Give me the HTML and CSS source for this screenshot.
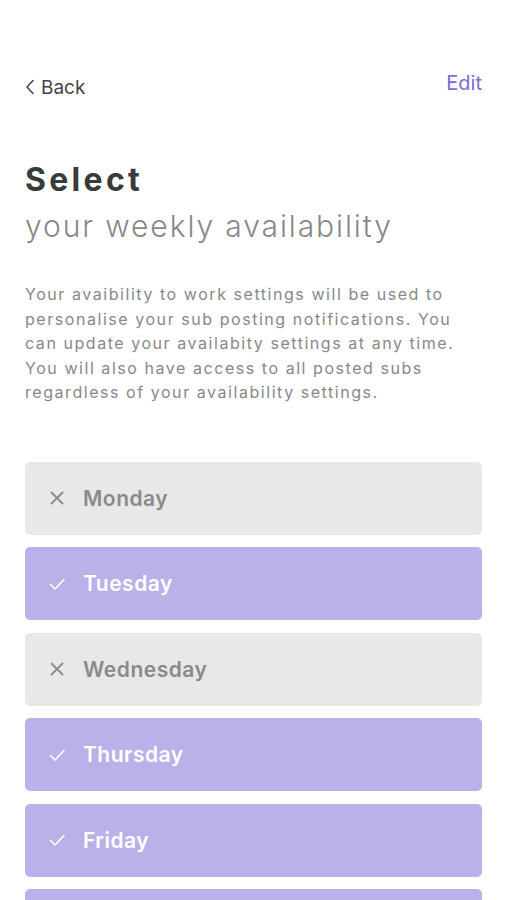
FILE: index.html
```html
<!DOCTYPE html>
<html>
<head>
    <meta name="viewport" content="width=device-width, initial-scale=1.0">
    <link rel="stylesheet" href="styles.css">
</head>
<body>
    <div class="screen">
        <div class="nav">
            <div class="back">
                <svg class="back-icon" width="10" height="16" viewBox="0 0 10 16"><path d="M8 1.5 L2 8 L8 14.5" fill="none" stroke="#444" stroke-width="1.6" stroke-linecap="round" stroke-linejoin="round"/></svg>
                Back
            </div>
            <div class="edit">Edit</div>
        </div>

        <div class="title">Select</div>
        <div class="subtitle">your weekly availability</div>

        <p class="description">Your avaibility to work settings will be used to personalise your sub posting notifications. You can update your availabity settings at any time. You will also have access to all posted subs regardless of your availability settings.</p>

        <div class="days">
            <div class="day off">
                <svg class="mark" width="16" height="16" viewBox="0 0 16 16"><path d="M2.5 2.5 L13.5 13.5 M13.5 2.5 L2.5 13.5" stroke="#8a8a8a" stroke-width="1.8" stroke-linecap="round"/></svg>
                <span>Monday</span>
            </div>
            <div class="day on">
                <svg class="mark" width="16" height="16" viewBox="0 0 16 16"><path d="M1.5 8.5 L6 13 L15 3.5" fill="none" stroke="#fff" stroke-width="1.6" stroke-linecap="round" stroke-linejoin="round"/></svg>
                <span>Tuesday</span>
            </div>
            <div class="day off">
                <svg class="mark" width="16" height="16" viewBox="0 0 16 16"><path d="M2.5 2.5 L13.5 13.5 M13.5 2.5 L2.5 13.5" stroke="#8a8a8a" stroke-width="1.8" stroke-linecap="round"/></svg>
                <span>Wednesday</span>
            </div>
            <div class="day on">
                <svg class="mark" width="16" height="16" viewBox="0 0 16 16"><path d="M1.5 8.5 L6 13 L15 3.5" fill="none" stroke="#fff" stroke-width="1.6" stroke-linecap="round" stroke-linejoin="round"/></svg>
                <span>Thursday</span>
            </div>
            <div class="day on">
                <svg class="mark" width="16" height="16" viewBox="0 0 16 16"><path d="M1.5 8.5 L6 13 L15 3.5" fill="none" stroke="#fff" stroke-width="1.6" stroke-linecap="round" stroke-linejoin="round"/></svg>
                <span>Friday</span>
            </div>
            <div class="day on">
                <svg class="mark" width="16" height="16" viewBox="0 0 16 16"><path d="M1.5 8.5 L6 13 L15 3.5" fill="none" stroke="#fff" stroke-width="1.6" stroke-linecap="round" stroke-linejoin="round"/></svg>
                <span>Saturday</span>
            </div>
        </div>
    </div>
</body>
</html>
```

FILE: styles.css
```css
body {
    margin: 0;
    padding: 0;
    background-color: #fff;
    font-family: Inter, "Noto Sans", sans-serif;
    overflow: hidden;
}

.screen {
    padding: 0 25px;
}

.nav {
    display: flex;
    justify-content: space-between;
    align-items: center;
    height: 40px;
    margin-top: 65px;
}

.back {
    display: flex;
    align-items: center;
    gap: 6px;
    font-size: 19px;
    color: #444;
    margin-top: 4px;
}

.edit {
    font-size: 20px;
    color: #7c6ad6;
    margin-top: -4px;
}

.title {
    margin-top: 55px;
    font-size: 32px;
    font-weight: 700;
    letter-spacing: 3.3px;
    color: #3a3a3a;
    line-height: 40px;
}

.subtitle {
    font-size: 30px;
    font-weight: 300;
    letter-spacing: 1.9px;
    color: #888;
    line-height: 40px;
    margin-top: 6px;
}

.description {
    margin: 36px 0 0;
    font-size: 16px;
    letter-spacing: 1.55px;
    line-height: 24.5px;
    color: #888;
}

.days {
    display: flex;
    flex-direction: column;
    gap: 12.5px;
    margin-top: 57px;
}

.day {
    display: flex;
    align-items: center;
    height: 73px;
    border-radius: 5px;
    padding-left: 24px;
    font-size: 21px;
    font-weight: 600;
    letter-spacing: 0.5px;
}

.mark {
    margin-right: 18px;
}

.day.off {
    background-color: #e8e8e8;
    color: #8a8a8a;
}

.day.on {
    background-color: #b9b1e8;
    color: #fff;
}
```
